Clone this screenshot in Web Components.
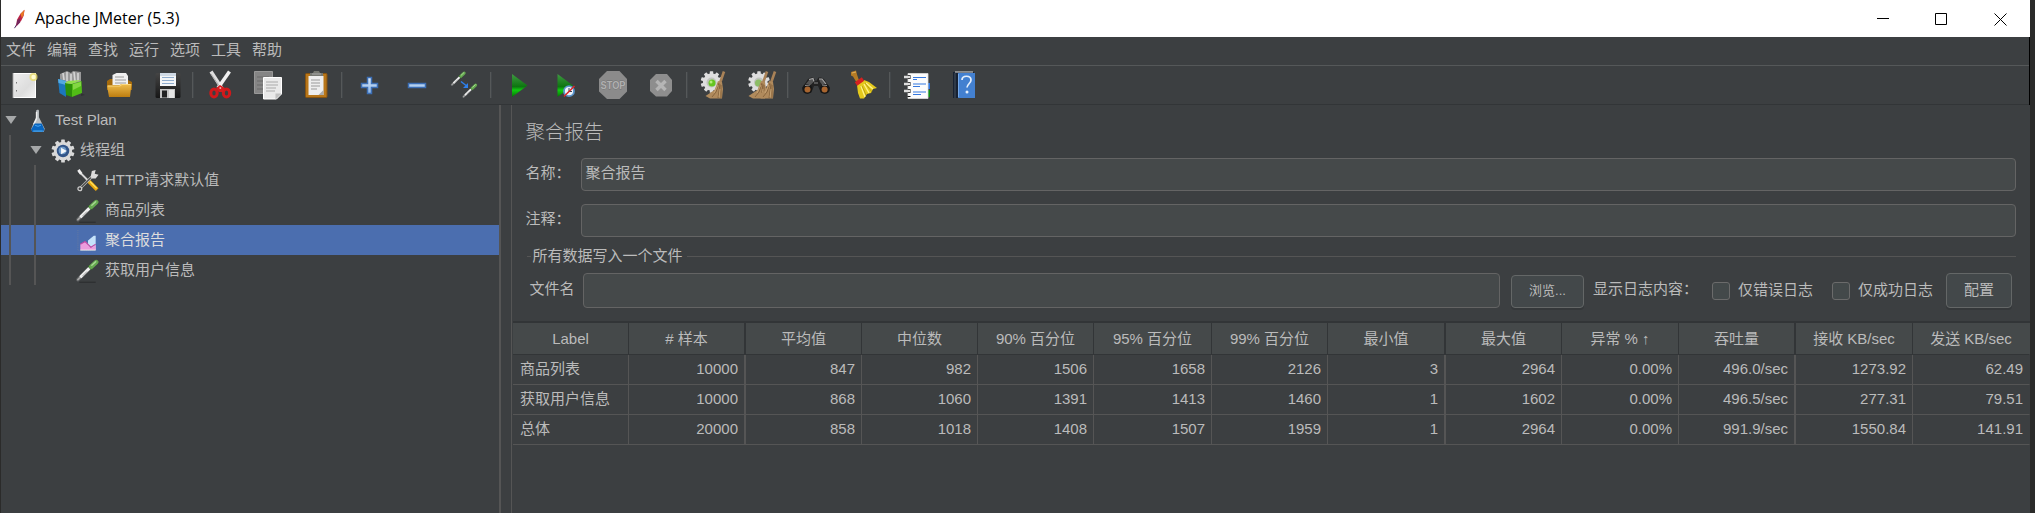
<!DOCTYPE html>
<html lang="zh-CN">
<head>
<meta charset="utf-8">
<title>Apache JMeter (5.3)</title>
<style>
html,body{margin:0;height:100%;overflow:hidden;background:#2b2b2a}
body{font:15px/30px "Liberation Sans","Noto Sans CJK SC",sans-serif;font-weight:400;color:#bbb}
</style>
</head>
<body>
<jm-window></jm-window>
<script>
const define=(name,html,init)=>customElements.define(name,class extends HTMLElement{
  constructor(){super();this.attachShadow({mode:'open'})}
  connectedCallback(){
    const t=document.createElement('template');
    t.innerHTML=typeof html==='function'?html(this):html;
    this.shadowRoot.replaceChildren(t.content.cloneNode(true));
    if(init)init(this,this.shadowRoot);
  }
});

const gear=(cx,cy,r,fill)=>{
  let s='';
  for(let i=0;i<10;i++)s+=`<rect x="${cx-r*.16}" y="${cy-r}" width="${r*.32}" height="${r*.5}" rx=".6" transform="rotate(${i*36} ${cx} ${cy})"/>`;
  return `<g fill="${fill}">${s}<circle cx="${cx}" cy="${cy}" r="${r*.8}"/></g>`;
};
const broom=(dx,dy)=>`<g transform="translate(${dx} ${dy})"><path d="M27 2.500L23 14" stroke="#a98257" stroke-width="2.600"/><path d="M21 12l4 1 1 7-1 9.500H13l-4.500-2.500 9-6z" fill="#b08a5c"/><path d="M22 14l-3 9-4 5M23 15l-2 14M24 16l0 13" stroke="#7d5c36" stroke-width=".8" fill="none"/><path d="M21 16l-4 8M23 20l-1 8" stroke="#d0ad7e" stroke-width=".7"/></g>`;
const dropper=`<path d="M1.500 21.500L13 10" stroke="#55585a" stroke-width="4" stroke-linecap="round"/><path d="M1.500 21.500L5 18" stroke="#a5a5a5" stroke-width="2" stroke-linecap="round"/><path d="M4 19L13.500 9.500" stroke="#f2f2f2" stroke-width="3"/><path d="M6 18l5-5" stroke="#888" stroke-width=".8"/><path d="M12.500 7l4 4" stroke="#35632c" stroke-width="2"/><path d="M15.500 8L20.500 3.200" stroke="#65a850" stroke-width="4.800" stroke-linecap="round"/><path d="M16 6.500L20 2.800" stroke="#a9d894" stroke-width="1.500" stroke-linecap="round"/>`;
const ICONS={
 new:`<defs><linearGradient id="g" x2="1" y2="1"><stop stop-color="#eee"/><stop offset=".6" stop-color="#ddd"/><stop offset="1" stop-color="#f4f4f4"/></linearGradient></defs><rect x="5.500" y="4.500" width="22" height="24" fill="url(#g)" stroke="#fff"/><path d="M5 4v25" stroke="#999"/><path d="M8.500 13v1.500M8.500 21v1.500" stroke="#777"/><circle cx="25.500" cy="8" r="4" fill="#e8dc6a" opacity=".8"/><circle cx="25.500" cy="8" r="2.200" fill="#fffbd0"/>`,
 templates:`<path d="M6 5l7-3 4 2 2-2 8 1v10L11 16 6 12z" fill="#999"/><path d="M9 4l1 7M13 3v9M17 5v7M20 3l1 9M24 4v8" stroke="#d5d5d5" stroke-width="1.600"/><path d="M4 10l8 2v16l-6.500-4z" fill="#1c77bd"/><path d="M4 10l8 2v4l-7.500-2z" fill="#54a9df"/><path d="M27 24l4 2-4 1z" fill="#303233"/><path d="M11 14l7 1v13l-6-2z" fill="#2c9009"/><path d="M11 14l3-2 13-1-9 4z" fill="#93e04f"/><path d="M18 15l9.500-3 .5 12-10 4z" fill="#51bd16"/><path d="M19 15l8-2v4l-8 4z" fill="#83d743"/>`,
 open:`<defs><linearGradient id="g" x2="0" y2="1"><stop stop-color="#efbd4d"/><stop offset="1" stop-color="#bd7d10"/></linearGradient></defs><path d="M4 12l3-2h16l6 3v8H4z" fill="#a66b0c"/><path d="M9.500 16V6l4-2H23l2 3v9z" fill="#f0f0f0"/><path d="M12 8h9M12 11h11M12 14h11" stroke="#999" stroke-width="1.200"/><path d="M4 16.500h12l2-1.500h10.500L27 28H6z" fill="url(#g)"/><path d="M5 17h12l2-1.500h8.500" stroke="#ffe08a" fill="none" stroke-width=".8"/>`,
 save:`<defs><linearGradient id="g" x2="0" y2="1"><stop stop-color="#454545"/><stop offset="1" stop-color="#161616"/></linearGradient></defs><rect x="3.500" y="4" width="25" height="25" rx="1.500" fill="url(#g)"/><path d="M8 4h16v13H8z" fill="#f3f5f7"/><path d="M8 4h16v3H8z" fill="#d0dae5"/><path d="M10 8.500h12M10 11.500h12M10 14.500h12" stroke="#8faccd" stroke-width="1.100"/><rect x="8" y="20" width="15" height="9" fill="#c5c5c5"/><rect x="10" y="21.500" width="5" height="7" fill="#222"/><path d="M17 21h5v8h-5z" fill="#e5e5e5"/>`,
 cut:`<path d="M7 2.500l11 17" stroke="#dedede" stroke-width="3.500"/><path d="M25.500 2.500L14 19" stroke="#f0f0f0" stroke-width="3.500"/><path d="M7 5l9 13" stroke="#999" stroke-width=".7"/><g fill="none" stroke="#d0191b" stroke-width="3"><ellipse cx="10" cy="24" rx="3.200" ry="4"/><ellipse cx="22.500" cy="24" rx="3.200" ry="4"/></g><path d="M12 19l4-3 5 3-2 4h-4z" fill="#d61c1e"/><circle cx="16.300" cy="19" r="1" fill="#f0aaa6"/>`,
 copy:`<path d="M2.500 2.500h18v22h-18z" fill="#858585" stroke="#989898"/><path d="M5 8h12M5 12h12M5 16h12M5 20h8" stroke="#6a6a6a" stroke-width="1.200"/><path d="M11.500 8.500h18V25l-5 5h-13z" fill="#e9e9e9" stroke="#fff"/><path d="M14 13h12M14 16h12M14 19h10M14 22h9" stroke="#aaa" stroke-width="1.200"/><path d="M29.500 24.500h-6v6z" fill="#c0c0c0"/>`,
 paste:`<rect x="5.500" y="4.500" width="21.500" height="24" rx="1" fill="#b87619" stroke="#865310"/><path d="M8.500 7h15v19h-15z" fill="#eee"/><path d="M23.500 21v5h-5z" fill="#aaa"/><path d="M11 11h9M11 14h9M11 17h9M11 20h6" stroke="#999" stroke-width="1.200"/><path d="M10 7V4h3l1-2h5l1 2h3v3z" fill="#777972"/><path d="M12 5h9" stroke="#aaa"/>`,
 plus:`<defs><linearGradient id="g" x2="0" y2="1"><stop stop-color="#d9e9fb"/><stop offset="1" stop-color="#8db5e5"/></linearGradient></defs><path d="M14.500 8.500h4v6h6v4h-6v6h-4v-6h-6v-4h6z" fill="url(#g)" stroke="#3b6eb5" stroke-width="1.500"/>`,
 minus:`<path d="M7.500 14.500h17v4h-17z" fill="#b3d0f1" stroke="#3b6eb5" stroke-width="1.500"/>`,
 toggle:`<g transform="translate(3 2) scale(.64)">${dropper}</g><g transform="translate(14.500 14) scale(.64)">${dropper}</g><path d="M13 12.500l5 4" stroke="#2e80ee" stroke-width="1.500"/><path d="M20 14v5h-5z" fill="#2e80ee"/>`,
 start:`<defs><linearGradient id="g" x2="0" y2="1"><stop stop-color="#3f9a42"/><stop offset=".55" stop-color="#0d7510"/><stop offset=".7" stop-color="#10cc10"/><stop offset="1" stop-color="#057006"/></linearGradient></defs><path d="M9 5l15.500 11.500L9 28z" fill="url(#g)"/>`,
 startno:`<defs><linearGradient id="g" x2="0" y2="1"><stop stop-color="#3f9a42"/><stop offset=".55" stop-color="#0d7510"/><stop offset=".7" stop-color="#10cc10"/><stop offset="1" stop-color="#057006"/></linearGradient></defs><path d="M7.500 5L23 16.500 7.500 28z" fill="url(#g)"/><circle cx="19" cy="22.200" r="5" fill="#eef3fa" stroke="#5b95cc" stroke-width="1.800"/><path d="M19 19v3.500h3" fill="none" stroke="#345" stroke-width="1"/><path d="M14 27.500L24.500 17" stroke="#d92828" stroke-width="1.600"/>`,
 stop:`<path d="M10 2h12.500L30 10v12.500L22.500 30H10L2 22.500V10z" fill="#8b8b8b"/><text x="16" y="20.300" text-anchor="middle" font-family="Liberation Sans" font-size="11.500" font-weight="700" textLength="25" lengthAdjust="spacingAndGlyphs" fill="#b0b0b0" stroke="#707070" stroke-width=".8" paint-order="stroke">STOP</text>`,
 shutdown:`<path d="M11 5h11l5 6v11l-5 5.500H11L5 22V11z" fill="#8e8e8e"/><path d="M11.500 12l9 9M20.500 12l-9 9" stroke="#b5b5b5" stroke-width="3.500"/>`,
 clear:gear(14.500,13,10.800,'#dedede')+`<circle cx="14.500" cy="13.500" r="5" fill="#c0c3bd"/><circle cx="15" cy="14" r="3.500" fill="#65c621"/><circle cx="14" cy="13" r="1.500" fill="#b4ed7b"/>`+broom(0,0),
 clearall:gear(13,13,10.800,'#dedede')+`<circle cx="13" cy="13.500" r="5" fill="#c0c3bd"/><circle cx="12.500" cy="14" r="3.500" fill="#8dbd66"/>`+broom(-6,0)+broom(2,0),
 search:`<path d="M2 19l6-9 3-1.500h2.500l2.500 4 2.500-4H21l3 1.500 6 9-4 5h-5l-3-7h-4l-3 7H6z" fill="#222"/><path d="M5 16l5-6h3l.5 3-5 5zM19 10h3l5 6-3 2-4-5z" fill="#555"/><path d="M9 10.500l4-1 1 3M19 10l3 0 4 5" stroke="#a5a5a5" stroke-width="1.200" fill="none"/><circle cx="7.300" cy="20" r="5" fill="#171717"/><circle cx="24.800" cy="20" r="5" fill="#171717"/><circle cx="7.500" cy="20.500" r="3" fill="#a8652f"/><circle cx="24.600" cy="20.500" r="3" fill="#a8652f"/><path d="M5 16.500l5-.5M22 16l5 .5" stroke="#8f8f8f"/><path d="M14 14h4" stroke="#888"/>`,
 reset:`<path d="M4 3l5-1.500 1 4 2 6-3 1-3-5-2-1z" fill="#b57b24"/><path d="M5 4l4-1" stroke="#e1b05c"/><path d="M10 16l7-5 5 2 8 6-4 1-2 4-4 1-3 4.500h-4L11 24z" fill="#e4c91c"/><path d="M14 17l4 11M17 15l5 9M19 14l7 6" stroke="#fff286" stroke-width="1.400"/><path d="M15 17l4 9M18 14l7 9" stroke="#a88e0a" stroke-width=".7"/><path d="M9 15l7-5" stroke="#d52120" stroke-width="4"/>`,
 function:`<path d="M23 14h6v6h-6z" fill="#2f76dc"/><path d="M23 21h6v7h-6z" fill="#0b8b13"/><path d="M7 4.500h20v25H7z" fill="#fcfcfc" stroke="#ddd" stroke-width=".8"/><path d="M8 6v22" stroke="#111" stroke-width="3" stroke-dasharray="4 3"/><path d="M3 8h6M3 15h6M3 22h6" stroke="#ddd" stroke-width="2.500"/><path d="M12 8.500h13M12 10.500h4M12 15h13M12 17.500h7M12 23h13M12 25.500h8" stroke="#3578df" stroke-width="1.200"/>`,
 help:`<path d="M4 3h21v26H4z" fill="#172131"/><path d="M9 4h17v25H9z" fill="#4380d0"/><path d="M6 3h18" stroke="#dedede"/><path d="M6 4v25" stroke="#47525e"/><path d="M9.500 5v23" stroke="#76a9e8"/><path d="M13 11c0-5 9-5 9 0 0 3.500-4 4-4 7.500" fill="none" stroke="#e5effc" stroke-width="1.700"/><circle cx="18" cy="23" r="1.500" fill="#e5effc"/>`,
 flask:`<path d="M10 1.500l2-1 1 1v7l6 12-1 3.500H6L5 20.500l5-12z" fill="#b9bec1"/><path d="M10.500 3v7l-3 6" stroke="#eee" stroke-width="1.500" fill="none"/><path d="M8.500 15h7.500l2.500 6-1 3H6l-1-3z" fill="#0865bf"/><path d="M9 17l3 1 3-1" stroke="#49a8f5" fill="none"/><path d="M7 23h10" stroke="#66baf4"/>`,
 threads:gear(12,12.500,12,'#d9d9d9')+`<circle cx="12" cy="12.500" r="6.500" fill="#315488"/><circle cx="11.500" cy="12" r="4" fill="#6f9bc9"/><path d="M10 9l6 3.500-6 3.500z" fill="#f5f7fa"/>`,
 tools:`<path d="M2 2l11 11" stroke="#d8d8d8" stroke-width="2"/><path d="M2 1l3 4" stroke="#eee" stroke-width="3"/><path d="M13 13l8.500 8.500" stroke="#e9a60d" stroke-width="4"/><path d="M14 13l7 7" stroke="#ffe05b" stroke-width="1.300"/><path d="M3 21L17 7" stroke="#bfc0bd" stroke-width="2.800"/><path d="M5 19l10-10" stroke="#444" stroke-width="1.200"/><circle cx="3.500" cy="20.500" r="2" fill="#444" stroke="#ccc" stroke-width="1.300"/><path d="M15 7l1-5 4-1-1 4 4 1-3 4h-4z" fill="#ddd"/>`,
 dropper:dropper+`<path d="M3 24.200h17" stroke="#292b2c" stroke-width="1"/>`,
 chart:`<path d="M1.500 1v21.500h19" fill="none" stroke="#6579a2" stroke-dasharray="1 1"/><path d="M12 12l6-5h2v15h-8z" fill="#c5e3fb"/><path d="M4 22v-6l5-3 2 1 2 4 4 1 3-2v5z" fill="#ed9cdd"/><path d="M4 16l5-3 3 3 3 3 5-3" stroke="#bd49a4" stroke-width="1.200" fill="none"/><path d="M4 22h16" stroke="#eee"/>`,
 feather:`<path d="M1 23L10 8" stroke="#53356b" stroke-width="1.200"/><path d="M3 21l1-8 4-7 5-5-1 7-3 6z" fill="#bb2345"/><path d="M8 6l5-5-1 6-2 4z" fill="#e97826"/><path d="M3 21l1-7 3-3 1 5z" fill="#74275e"/>`
};
define('jm-icon',h=>{const s=+h.getAttribute('size')||32,b=h.getAttribute('box')||'0 0 32 32';
  return `<style>:host{display:block;width:${h.getAttribute('w')||s}px;height:${s}px;flex:none}svg{display:block;width:100%;height:100%}</style><svg viewBox="${b}" fill="none">${ICONS[h.getAttribute('name')]}</svg>`});

define('jm-titlebar',`<style>:host{display:flex;height:37px;background:#fff;color:#000;align-items:center;font:16px/37px "Open Sans","Noto Sans",sans-serif;padding-left:12px}
 .t{margin-left:9px;width:150px;white-space:nowrap}svg{display:block;margin-left:auto;margin-right:23px}</style>
 <jm-icon name="feather" size="20" w="13" box="0 0 14 24"></jm-icon><span class="t"><slot></slot></span>
 <svg width="130" height="14" fill="none" stroke="#000"><path d="M0 6.500h12M58.500 1.500h11v11h-11zM117.500 1.500l12 12M129.500 1.500l-12 12"/></svg>`);
define('jm-menubar',`<style>:host{display:flex;height:29px;box-sizing:border-box;border-bottom:1px solid #555859;padding-left:5px;gap:11px;line-height:25px;font-size:15px}</style>
 ${['文件','编辑','查找','运行','选项','工具','帮助'].map(t=>`<span>${t}</span>`).join('')}`);

const bar=[['new',24],['templates',70],['open',119],['save',168],['|',193],['cut',220],['copy',268],['paste',316],['|',342],['plus',369],['minus',417],['toggle',464],['|',491],['start',519],['startno',566],['stop',613],['shutdown',661],['|',687],['clear',713],['clearall',762],['|',788],['search',816],['reset',863],['|',890],['function',917],['help',965]];
define('jm-toolbar',()=>{let end=1,out='';
 for(const [n,c] of bar){const w=n==='|'?2:32,x=c-w/2,m=x-end;end=x+w;
  out+=n==='|'?`<i style="margin-left:${m}px"></i>`:`<jm-icon name="${n}" style="margin-left:${m}px"></jm-icon>`}
 return `<style>:host{display:flex;height:39px;box-sizing:border-box;align-items:center;border-bottom:1px solid #323537}i{height:26px;background:#555859;border-right:1px solid #43474a;box-sizing:border-box;width:2px;flex:none}</style>${out}`});

define('jm-node',h=>{const l=+h.getAttribute('level');
 return `<style>:host{display:flex;height:30px;align-items:center;padding-left:${3+l*25}px;white-space:pre}
 :host([selected]){background:#4b6eaf;color:#ddd}
 b{width:14px;height:8px;margin-right:8px;display:block;flex:none}b.o{background:#a6a8a9;clip-path:polygon(10% 0,90% 0,50% 100%)}
 span{margin-bottom:1px}jm-icon{margin:2px 5px 0 0}</style><b class="${l<2?'o':''}"></b><jm-icon size="24" box="0 0 24 25" name="${h.getAttribute('icon')}"></jm-icon><span><slot></slot></span>`});
define('jm-tree',`<style>:host{display:block;position:relative;width:498px;flex:none}
 i{position:absolute;width:2px;background:#555;bottom:0}.g{position:relative;height:180px}</style>
 <div class="g"><jm-node level="0" icon="flask">Test Plan</jm-node><jm-node level="1" icon="threads">线程组</jm-node><jm-node level="2" icon="tools">HTTP请求默认值</jm-node><jm-node level="2" icon="dropper">商品列表</jm-node><jm-node level="2" icon="chart" selected>聚合报告</jm-node><jm-node level="2" icon="dropper">获取用户信息</jm-node>
 <i style="left:8px;top:30px"></i><i style="left:33px;top:60px"></i></div>`);

define('jm-field',`<style>:host{display:block;box-sizing:border-box;height:33px;border:1px solid #646464;border-radius:4px;background:#45494a;padding-left:4px;line-height:28px}</style><slot></slot>`);
define('jm-button',`<style>:host{display:block;box-sizing:border-box;border:1px solid #646767;border-radius:4px;background:#43484a;text-align:center;box-shadow:0 2px 0 #35383a}</style><slot></slot>`);
define('jm-check',`<style>:host{display:flex;align-items:center;white-space:nowrap}i{width:18px;height:18px;box-sizing:border-box;border:1px solid #6b6b6b;border-radius:3px;background:#43494a;margin:3px 8px 0 0}</style><i></i><slot></slot>`);
define('jm-form',`<style>:host{display:block;height:216px;padding:0 14px 0 12.500px;white-space:nowrap}
 h1{margin:0;font:300 19.500px/52px "Noto Sans CJK SC",sans-serif;height:53px}
 .r{display:grid;grid-template-columns:55px 1fr;height:33px;line-height:30px}.r+.r{margin-top:13px}
 .l{display:flex;align-items:center;height:20px;margin-top:9px;line-height:20px}
 .l:before{content:"";width:4px;height:1px;background:#555;margin:0 2px 0 1px}.l:after{content:"";flex:1;height:1px;background:#555;margin-left:4px}
 .f{display:flex;margin-top:7px;height:35px;align-items:center;line-height:30px;padding:0 4px 0 4px}
 .f>span{margin-bottom:3px}
 .f jm-field{flex:1;height:35px;margin:0 11px 0 8px}
 .b{width:73px;height:33px;line-height:30px;font-size:13px;margin:1px 9px 0 0}.c{width:66px;height:35px;line-height:32px;margin-left:13px}
 jm-check{margin-bottom:2px}</style>
 <h1>聚合报告</h1><div class="r"><span>名称：</span><jm-field>聚合报告</jm-field></div><div class="r"><span>注释：</span><jm-field></jm-field></div>
 <div class="l">所有数据写入一个文件</div>
 <div class="f"><span>文件名</span><jm-field></jm-field><jm-button class="b">浏览...</jm-button><span style="width:119px">显示日志内容：</span><jm-check>仅错误日志</jm-check><jm-check style="margin-left:19px">仅成功日志</jm-check><jm-button class="c">配置</jm-button></div>`);

const heads=['Label','# 样本','平均值','中位数','90% 百分位','95% 百分位','99% 百分位','最小值','最大值','异常 % ↑','吞吐量','接收 KB/sec','发送 KB/sec'];
const rows=[['商品列表','10000','847','982','1506','1658','2126','3','2964','0.00%','496.0/sec','1273.92','62.49'],['获取用户信息','10000','868','1060','1391','1413','1460','1','1602','0.00%','496.5/sec','277.31','79.51'],['总体','20000','858','1018','1408','1507','1959','1','2964','0.00%','991.9/sec','1550.84','141.91']];
define('jm-table',`<style>:host{display:block;border-top:2px solid #323537}
 .r{display:grid;grid-template-columns:116px 117px 116px 116px 116px 118px 116px 118px 116px 117px 117px 117px 117px;height:30px;line-height:28px}
 .r>*{box-sizing:border-box;border-right:1px solid #555;border-bottom:1px solid #555;padding-right:6px;text-align:right;white-space:pre}
 .r>*:first-child{text-align:left;padding-left:7px}
 .r>*:nth-child(2),.r>*:nth-child(8),.r>*:nth-child(11){border-right-width:2px}
 .h{height:32px;line-height:31px}.h>*,.h>*:first-child{text-align:center;padding:0;border-color:#323537;background:#45494a}
 .r>*:last-child{border-right-color:transparent}</style>
 <div class="r h">${heads.map(t=>`<span>${t}</span>`).join('')}</div>${rows.map(r=>`<div class="r">${r.map(t=>`<span>${t}</span>`).join('')}</div>`).join('')}`);

define('jm-window',`<style>:host{display:flex;flex-direction:column;height:513px;width:2029px;margin-left:1px;background:#3c3f41}
 .top{border-right:1px solid #000}.m{display:flex;flex:1;min-height:0}
 .s{width:10px;flex:none;border-left:2px solid #555;border-right:1px solid #555}.p{flex:1;min-width:0;padding-left:1px}</style>
 <jm-titlebar>Apache JMeter (5.3)</jm-titlebar><div class="top"><jm-menubar></jm-menubar><jm-toolbar></jm-toolbar></div>
 <div class="m"><jm-tree></jm-tree><div class="s"></div><div class="p"><jm-form></jm-form><jm-table></jm-table></div></div>`);
</script>
</body>
</html>
